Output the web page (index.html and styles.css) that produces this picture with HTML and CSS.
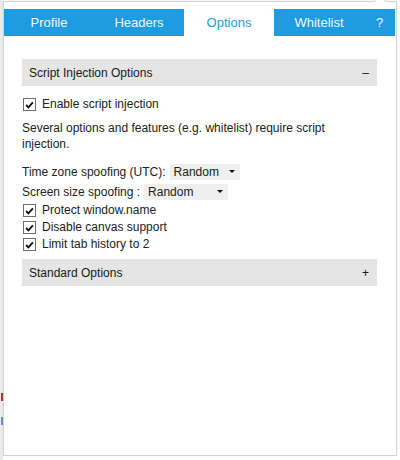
FILE: index.html
```html
<!DOCTYPE html>
<html>
<head>
<meta charset="utf-8">
<link rel="stylesheet" href="styles.css">
</head>
<body>
<div class="backdrop">
  <span class="mark mark-red"></span>
  <span class="mark mark-blue"></span>
</div>
<div class="popup">
  <span class="arrow"></span>
  <nav class="tabs">
    <div class="tab">Profile</div>
    <div class="tab">Headers</div>
    <div class="tab active">Options</div>
    <div class="tab">Whitelist</div>
    <div class="tab help">?</div>
  </nav>
  <div class="content">
    <div class="section-head"><span>Script Injection Options</span><span class="toggle">–</span></div>
    <label class="check-row first"><span class="box"><svg viewBox="0 0 12 12" width="12" height="12"><path d="M2.3 6 L4.8 8.6 L9.7 3.1" fill="none" stroke="#111" stroke-width="2"/></svg></span>Enable script injection</label>
    <p class="note">Several options and features (e.g. whitelist) require script injection.</p>
    <div class="select-row first-select">
      <span>Time zone spoofing (UTC):</span>
      <span class="select tz">Random<i class="caret"></i></span>
    </div>
    <div class="select-row">
      <span>Screen size spoofing :</span>
      <span class="select screen">Random<i class="caret"></i></span>
    </div>
    <label class="check-row"><span class="box"><svg viewBox="0 0 12 12" width="12" height="12"><path d="M2.3 6 L4.8 8.6 L9.7 3.1" fill="none" stroke="#111" stroke-width="2"/></svg></span>Protect window.name</label>
    <label class="check-row"><span class="box"><svg viewBox="0 0 12 12" width="12" height="12"><path d="M2.3 6 L4.8 8.6 L9.7 3.1" fill="none" stroke="#111" stroke-width="2"/></svg></span>Disable canvas support</label>
    <label class="check-row"><span class="box"><svg viewBox="0 0 12 12" width="12" height="12"><path d="M2.3 6 L4.8 8.6 L9.7 3.1" fill="none" stroke="#111" stroke-width="2"/></svg></span>Limit tab history to 2</label>
    <div class="section-head second"><span>Standard Options</span><span class="toggle plus">+</span></div>
  </div>
</div>
</body>
</html>
```

FILE: styles.css
```css
html, body {
  margin: 0;
  padding: 0;
}
body {
  width: 400px;
  height: 460px;
  overflow: hidden;
  background: linear-gradient(to right, #ebebeb 0, #ebebeb 3px, #ffffff 3px);
  font-family: "Liberation Sans", Arial, sans-serif;
  color: #222;
  position: relative;
}
.backdrop {
  position: absolute;
  left: 0;
  top: 0;
  width: 3px;
  height: 460px;
}
.mark {
  position: absolute;
  left: 1px;
  width: 3px;
  height: 8px;
}
.mark-red { top: 393px; background: #d8202a; }
.mark-blue { top: 417px; background: #6a8fc8; }

.popup {
  position: relative;
  box-sizing: border-box;
  margin: 1px 0 0 3px;
  width: 394px;
  height: 455px;
  border: 1px solid #d4d4d4;
  background: #fff;
  padding: 7px 1px 0 0;
  box-shadow: 0 0 2px rgba(0,0,0,0.08);
}
.arrow {
  position: absolute;
  top: -5px;
  left: 372px;
  width: 8px;
  height: 8px;
  background: #fff;
  border-left: 1px solid #d4d4d4;
  border-top: 1px solid #d4d4d4;
  transform: rotate(45deg);
}
.tabs {
  display: flex;
  height: 27px;
  background: #1e9be1;
  position: relative;
}
.tab {
  width: 90px;
  text-align: center;
  line-height: 27px;
  font-size: 13px;
  color: #f4f8fc;
}
.tab.active {
  background: #fff;
  color: #1e9be1;
}
.tab.help {
  flex: 1;
  width: auto;
}
.content {
  padding: 23px 18px 0 18px;
  font-size: 12px;
}
.section-head {
  display: flex;
  justify-content: space-between;
  align-items: center;
  height: 27px;
  background: #e5e5e5;
  padding: 0 8px 0 7px;
  font-size: 12px;
  color: #1a1a1a;
}
.section-head.second {
  margin-top: 6px;
}
.toggle {
  font-size: 12px;
}
.check-row {
  display: flex;
  align-items: center;
  height: 17px;
  line-height: 17px;
}
.check-row.first {
  margin-top: 10px;
}
.box {
  box-sizing: border-box;
  width: 13px;
  height: 13px;
  border: 1px solid #6e6e6e;
  background: #fff;
  margin: 0 6px 0 1px;
  display: flex;
  align-items: center;
  justify-content: center;
}
.box svg {
  display: block;
}
.note {
  margin: 7px 0 0 0;
  line-height: 16px;
  padding-right: 20px;
}
.select-row {
  display: flex;
  align-items: center;
  height: 20px;
}
.select-row.first-select {
  margin-top: 10px;
}
.select {
  position: relative;
  box-sizing: border-box;
  display: block;
  height: 16px;
  line-height: 16px;
  background: #efefef;
  padding-left: 4px;
  margin-left: 4px;
}
.select.tz { width: 70px; }
.select.screen { width: 84px; }
.caret {
  position: absolute;
  right: 5px;
  top: 6px;
  width: 0;
  height: 0;
  border-left: 3px solid transparent;
  border-right: 3px solid transparent;
  border-top: 3px solid #111;
}
```
